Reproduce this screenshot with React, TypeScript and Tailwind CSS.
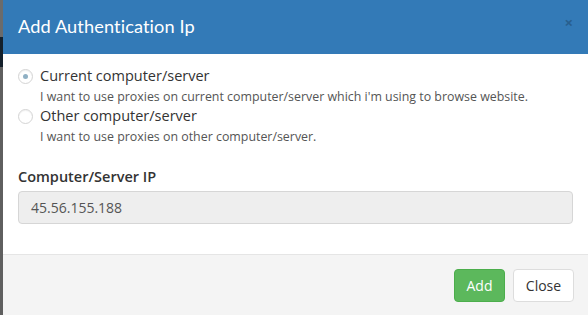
import type { ReactNode } from "react";

function Radio({ checked }: { checked?: boolean }) {
  return (
    <span className="flex h-[15px] w-[15px] shrink-0 items-center justify-center rounded-full border border-[#d4d4d4] bg-white shadow-[inset_0_1px_1px_rgba(0,0,0,0.06)]">
      {checked ? <span className="h-[5px] w-[5px] rounded-full bg-[#8fb0c4]" /> : null}
    </span>
  );
}

function Option({
  checked,
  label,
  hint,
}: {
  checked?: boolean;
  label: string;
  hint: ReactNode;
}) {
  return (
    <div>
      <div className="flex items-center gap-[7px]">
        <Radio checked={checked} />
        <span className="text-[14.5px] leading-[20px] text-[#333]">{label}</span>
      </div>
      <p className="mt-[2px] pl-[22px] text-[12.4px] leading-[17px] text-[#555]">{hint}</p>
    </div>
  );
}

export default function App() {
  return (
    <div className="flex h-[315px] w-[588px] overflow-hidden bg-white font-['Open_Sans',sans-serif]">
      <div className="flex w-[3px] shrink-0 flex-col bg-[#5f5f5f]">
        <div className="h-[37px] bg-[#6b6b6b]" />
        <div className="h-[30px] bg-[#14202b]" />
      </div>

      <div className="flex flex-1 flex-col">
        <header className="flex h-[54px] shrink-0 items-center justify-between bg-[#337ab7] pl-[15px] pr-[15px]">
          <h1 className="font-['Lato',sans-serif] text-[18.2px] font-normal tracking-[0.1px] text-white">
            Add Authentication Ip
          </h1>
          <span className="-mt-[10px] text-[15px] font-bold leading-none text-[#285f8f]">×</span>
        </header>

        <div className="flex flex-1 flex-col px-[15px] pt-[12px]">
          <div className="flex flex-col gap-[1px]">
            <Option
              checked
              label="Current computer/server"
              hint="I want to use proxies on current computer/server which i'm using to browse website."
            />
            <Option label="Other computer/server" hint="I want to use proxies on other computer/server." />
          </div>

          <label className="mt-[22px] text-[14.5px] font-semibold leading-[20px] text-[#333]">
            Computer/Server IP
          </label>
          <div className="mt-[4px] flex h-[33px] items-center rounded-[4px] border border-[#d6d6d6] bg-[#eeeeee] px-[12px] text-[14px] text-[#555]">
            45.56.155.188
          </div>
        </div>

        <footer className="flex h-[61px] shrink-0 items-center justify-end gap-[8px] border-t border-[#e5e5e5] bg-[#f4f4f4] pr-[14px]">
          <button className="h-[33px] w-[51px] rounded-[4px] border border-[#4cae4c] bg-[#5cb85c] text-[14px] text-white">
            Add
          </button>
          <button className="h-[33px] w-[61px] rounded-[4px] border border-[#ddd] bg-white text-[14px] text-[#333]">
            Close
          </button>
        </footer>
      </div>
    </div>
  );
}
